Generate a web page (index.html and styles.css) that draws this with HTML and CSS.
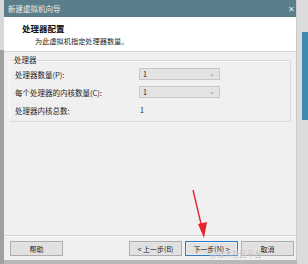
FILE: index.html
```html
<!DOCTYPE html>
<html lang="zh-CN">
<head>
  <meta charset="UTF-8" />
  <title>新建虚拟机向导</title>
  <link rel="stylesheet" href="styles.css">
</head>
<body>
  <div class="screen">
    <div class="edge-left"></div>
    <div class="dialog">
      <div class="titlebar">
        <span class="title">新建虚拟机向导</span>
        <span class="close">✕</span>
      </div>
      <div class="header">
        <div class="heading">处理器配置</div>
        <div class="subheading">为此虚拟机指定处理器数量。</div>
      </div>
      <div class="content">
        <fieldset class="group">
          <legend>处理器</legend>
          <div class="row">
            <span class="label">处理器数量(P):</span>
            <div class="select"><span>1</span><span class="caret">⌄</span></div>
          </div>
          <div class="row">
            <span class="label">每个处理器的内核数量(C):</span>
            <div class="select"><span>1</span><span class="caret">⌄</span></div>
          </div>
          <div class="row">
            <span class="label">处理器内核总数:</span>
            <span class="value">1</span>
          </div>
        </fieldset>
      </div>
      <div class="footer">
        <button class="btn">帮助</button>
        <div class="spacer"></div>
        <button class="btn">&lt; 上一步(B)</button>
        <button class="btn focus">下一步(N) &gt;</button>
        <button class="btn">取消</button>
      </div>
    </div>
    <div class="edge-right"><div class="blue"></div></div>

    <svg class="arrow" width="30" height="60" viewBox="0 0 30 60">
      <line x1="3" y1="8" x2="12" y2="46" stroke="#e3262c" stroke-width="1.4"/>
      <polygon points="8,42 17,40 14,56" fill="#e3262c"/>
    </svg>
    <div class="watermark">@技术社区平台</div>
  </div>
</body>
</html>
```

FILE: styles.css
```css
body {
  margin: 0;
  font-family: "Noto Sans CJK SC", "Liberation Sans", sans-serif;
  background: #b8b8b8;
  overflow: hidden;
}
.screen {
  position: relative;
  display: flex;
  width: 308px;
  height: 264px;
}
.edge-left {
  width: 4px;
  background: linear-gradient(to bottom, #d8d8d8 0, #d8d8d8 50px, #a0a0a0 50px);
}
.dialog {
  width: 293px;
  height: 260px;
  display: flex;
  flex-direction: column;
  background: #f0f0f0;
  border-right: 1px solid #c9c9c9;
  box-sizing: border-box;
}
.titlebar {
  height: 17px;
  background: #5a7e8a;
  display: flex;
  align-items: center;
  padding: 0 4px;
  color: #e8eef0;
}
.title {
  font-size: 7.5px;
  flex: 1;
}
.close {
  font-size: 8px;
  color: #dfe7ea;
  margin-right: -3px;
}
.header {
  height: 35px;
  background: #fff;
  border-bottom: 1px solid #d4d4d4;
  box-sizing: border-box;
  padding: 6px 0 0 18px;
}
.heading {
  font-size: 8.5px;
  font-weight: bold;
  color: #111;
  line-height: 11px;
}
.subheading {
  font-size: 7.2px;
  color: #222;
  margin: 2px 0 0 13px;
  line-height: 10px;
}
.content {
  flex: 1;
  padding: 3px 5px 0;
}
.group {
  margin: 0;
  padding: 0 0 2px 5px;
  border: 1px solid #dadada;
  border-left-color: #fafafa;
  box-shadow: inset 0 1px 0 #fafafa;
}
.group legend {
  font-size: 7.5px;
  color: #222;
  padding: 0;
  margin-left: -1px;
  line-height: 10px;
}
.row {
  display: flex;
  align-items: center;
  height: 18px;
  font-size: 7.5px;
  color: #1a1a1a;
}
.label {
  width: 124px;
}
.select {
  width: 81px;
  height: 12px;
  background: #e3e3e3;
  border: 1px solid #c8c8c8;
  box-sizing: border-box;
  display: flex;
  justify-content: space-between;
  align-items: center;
  padding: 0 4px 0 3px;
  font-size: 7px;
}
.caret {
  color: #8a8a8a;
  font-size: 7px;
  line-height: 6px;
  margin-top: -3px;
}
.value {
  font-size: 7px;
  margin-left: 1px;
}
.footer {
  height: 25px;
  border-top: 1px solid #d4d4d4;
  box-shadow: inset 0 1px 0 #fbfbfb;
  display: flex;
  align-items: flex-start;
  padding: 5px 0 0 6px;
  gap: 3px;
  box-sizing: border-box;
}
.spacer {
  flex: 1;
}
.btn {
  width: 53px;
  height: 15px;
  font-family: inherit;
  font-size: 7px;
  color: #222;
  background: #e1e1e1;
  border: 1px solid #adadad;
  padding: 0;
}
.btn.focus {
  border-color: #2f79c4;
  box-shadow: inset 0 0 0 1px #e6eef6;
}
.footer .btn:last-child {
  margin-right: 2px;
}
.edge-right {
  flex: 1;
  background: #dcdcdc;
  padding-top: 32px;
}
.blue {
  margin-left: 5px;
  height: 88px;
  background: #3d8cb0;
}
.arrow {
  position: absolute;
  left: 190px;
  top: 182px;
}
.watermark {
  position: absolute;
  left: 210px;
  top: 248px;
  font-size: 7.5px;
  color: rgba(150, 150, 150, 0.7);
  text-shadow: 0 0 1px #fff;
}
```
